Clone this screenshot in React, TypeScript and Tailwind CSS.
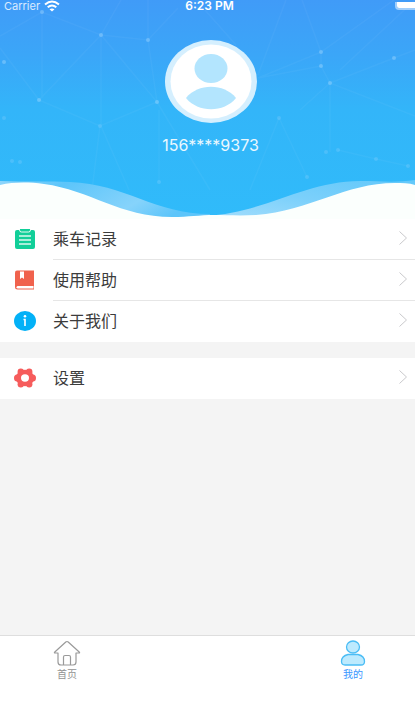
import type { ReactNode } from "react";

const stars = [
  [42, 12], [101, 35], [148, 40], [4, 62], [39, 100], [157, 102], [100, 126], [4, 118],
  [321, 52], [321, 66], [330, 83], [394, 58], [279, 118], [326, 152], [338, 150],
  [376, 159], [159, 182], [307, 177], [12, 161], [20, 162], [408, 166],
];

function Backdrop() {
  return (
    <svg
      className="absolute inset-0 h-full w-full"
      viewBox="0 0 415 219"
      preserveAspectRatio="none"
      aria-hidden="true"
    >
      <defs>
        <linearGradient id="sky" x1="0" y1="0" x2="0" y2="1">
          <stop offset="0" stopColor="#409bf8" />
          <stop offset="0.25" stopColor="#3ba6f8" />
          <stop offset="0.5" stopColor="#33b5f9" />
          <stop offset="1" stopColor="#30bbfa" />
        </linearGradient>
        <linearGradient id="foamLeft" x1="0" y1="0" x2="1" y2="0.3">
          <stop offset="0" stopColor="#8fd6fb" />
          <stop offset="0.3" stopColor="#5cc5fa" />
          <stop offset="0.75" stopColor="#86d3fb" />
          <stop offset="1" stopColor="#5cc5fa" />
        </linearGradient>
        <linearGradient id="foamRight" x1="0" y1="1" x2="1" y2="0">
          <stop offset="0" stopColor="#a5defc" />
          <stop offset="0.5" stopColor="#7bd0fb" />
          <stop offset="1" stopColor="#62c8fa" />
        </linearGradient>
      </defs>
      <rect width="415" height="219" fill="url(#sky)" />
      <g fill="none" stroke="#fff" strokeOpacity="0.04" strokeWidth="1.500">
        <path d="M0 36L42 12L101 35L148 40L178 8M42 12V98M0 48L39 100L101 35L157 102L148 40V0M101 35L121 0M101 35V126L129 190M39 100L100 126L157 102L210 190M100 126L92 190M159 182V110" />
        <path d="M205 10L236 45M286 0L258 75M302 0L321 52L394 0M258 78L321 52V66L330 83L394 58L415 50M258 78L321 66M415 0L340 70M330 83L300 110M330 83V152M330 83L415 116M279 118L307 177M279 118L250 190M338 150L376 159L408 166" />
      </g>
      <g fill="#a9dcff">
        {stars.map(([x, y]) => (
          <circle key={`${x}-${y}`} cx={x} cy={y} r="2" fillOpacity={y > 110 ? 0.22 : 0.4} />
        ))}
      </g>
      <path d="M0 181C25 182 50 181 70 182C125 184 155 214 210 214V219H0Z" fill="url(#foamLeft)" />
      <path d="M205 216C265 213 305 181 360 181C380 181 395 183 415 180V219H205Z" fill="url(#foamRight)" />
      <path
        d="M0 185C14 182 28 182 44 184C90 190 120 217 172 217C190 217 198 215 215 215C225 215 240 216 256 215C310 211 345 183 395 183C402 183 409 183 415 185V219H0Z"
        fill="#fbfffd"
      />
    </svg>
  );
}

function Avatar() {
  return (
    <svg className="h-[83px] w-[92px]" viewBox="0 0 92 83" aria-hidden="true">
      <ellipse cx="46" cy="41.5" rx="46" ry="41.5" fill="#d5effe" />
      <ellipse cx="46" cy="41.5" rx="40.5" ry="37" fill="#fff" />
      <ellipse cx="46" cy="28.5" rx="16.5" ry="14.5" fill="#b3e5fe" />
      <path d="M21 58C33 43 59 43 71 58C59 73 33 73 21 58Z" fill="#b3e5fe" />
    </svg>
  );
}

function RecordsIcon() {
  return (
    <svg className="h-5 w-[22px]" viewBox="0 0 22 20" aria-hidden="true">
      <rect x="1" y="1" width="20" height="19" rx="2" fill="#12cf99" />
      <path d="M5.500 0V1Q5.500 3 7.500 3H14.500Q16.500 3 16.500 1V0" fill="#12cf99" stroke="#fff" strokeWidth="0.900" />
      <path d="M5 7H17M5 11H17M5 15H17" stroke="#d9f9ee" strokeWidth="1.400" />
    </svg>
  );
}

function HelpIcon() {
  return (
    <svg className="h-5 w-[22px]" viewBox="0 0 22 20" aria-hidden="true">
      <path d="M3 0.500H20V19.500H3.500Q1 19.500 1 17V2.500Q1 0.500 3 0.500Z" fill="#f0624d" />
      <path d="M6 1.500H10V9L8 7.500L6 9Z" fill="#fff" />
      <path d="M19.500 16H4Q2.500 16 2.500 17.200T4 18.500H19.500Z" fill="#fff" />
    </svg>
  );
}

function AboutIcon() {
  return (
    <svg className="h-5 w-[22px]" viewBox="0 0 22 20" aria-hidden="true">
      <ellipse cx="11" cy="10" rx="11" ry="10" fill="#03b1f7" />
      <circle cx="11" cy="5.300" r="1.300" fill="#fff" />
      <path d="M9.500 8.500H11V15" fill="none" stroke="#fff" strokeWidth="1.600" />
    </svg>
  );
}

function SettingsIcon() {
  return (
    <svg className="h-5 w-[22px]" viewBox="0 0 22 20" aria-hidden="true">
      <g fill="#f65c5c">
        <ellipse cx="11" cy="10" rx="9.200" ry="8.300" />
        <ellipse cx="3.200" cy="10" rx="3.200" ry="3.500" />
        <ellipse cx="18.800" cy="10" rx="3.200" ry="3.500" />
        <circle cx="6.800" cy="3.700" r="3.200" />
        <circle cx="15.200" cy="3.700" r="3.200" />
        <circle cx="6.800" cy="16.300" r="3.200" />
        <circle cx="15.200" cy="16.300" r="3.200" />
      </g>
      <ellipse cx="11" cy="10" rx="4" ry="3.700" fill="#fff" />
    </svg>
  );
}

type RowProps = {
  icon: ReactNode;
  label: string;
  divided?: boolean;
};

function Row({ icon, label, divided }: RowProps) {
  return (
    <li>
      <button type="button" className="flex w-full items-center bg-white pl-[14px] text-left">
        <span className="pb-0.5">{icon}</span>
        <span
          className={`ml-[17px] flex h-[41px] flex-1 items-center justify-between border-b pr-2 pb-0.5 text-base text-[#3c3c3c] ${
            divided ? "border-[#e6e6e6]" : "border-white"
          }`}
        >
          {label}
          <svg className="h-[14px] w-2" viewBox="0 0 8 14" fill="none" stroke="#c9c9cc" aria-hidden="true">
            <path d="M0.500 0.500L7.500 7L0.500 13.500" />
          </svg>
        </span>
      </button>
    </li>
  );
}

function StatusBar() {
  return (
    <div className="relative grid h-2 grid-cols-3 items-center font-[Inter] text-[11px] leading-[8px] text-white">
      <span className="flex items-center gap-1 pl-1 text-white/80">
        Carrier
        <svg className="h-3 w-4" viewBox="0 0 16 12" fill="none" stroke="#fff" strokeWidth="2" aria-hidden="true">
          <path d="M1 4.500Q8 -1.500 15 4.500M3.700 7.300Q8 3.700 12.300 7.300" />
          <path d="M8 11.500L5.500 9.300Q8 7.500 10.500 9.300Z" fill="#fff" stroke="none" />
        </svg>
      </span>
      <span className="pl-1 text-center text-xs leading-[8px] font-semibold">6:23 PM</span>
      <span className="h-2 w-5 justify-self-end rounded-bl-sm border-b-2 border-l-2 border-white/50 bg-white bg-clip-padding" />
    </div>
  );
}

export default function App() {
  return (
    <div className="flex min-h-screen flex-col overflow-hidden bg-[#f4f4f4] font-['Noto_Sans_CJK_SC',sans-serif]">
      <header className="relative h-[219px]">
        <Backdrop />
        <StatusBar />
        <div className="relative flex flex-col items-center gap-3 pt-8 pl-[6px]">
          <Avatar />
          <p className="font-[Inter] text-base leading-5 text-white/90">156****9373</p>
        </div>
      </header>

      <main className="flex flex-1 flex-col gap-4">
        <ul className="bg-white">
          <Row icon={<RecordsIcon />} label="乘车记录" divided />
          <Row icon={<HelpIcon />} label="使用帮助" divided />
          <Row icon={<AboutIcon />} label="关于我们" />
        </ul>
        <ul>
          <Row icon={<SettingsIcon />} label="设置" />
        </ul>
      </main>

      <nav className="flex h-[67px] justify-between border-t border-[#dedede] bg-white pr-[14px] pl-[19px] pt-1 text-[10px] leading-4">
        <a href="#home" className="flex w-24 flex-col items-center text-[#929292]">
          <svg className="h-[26px] w-7" viewBox="0 0 28 26" fill="none" stroke="#9a9a9a" strokeWidth="1.200" strokeLinejoin="round" aria-hidden="true">
            <path d="M5 13H2.200Q0.800 13 1.800 12L12.800 2Q14 1 15.200 2L26.200 12Q27.200 13 25.800 13H23V22Q23 25 20 25H8Q5 25 5 22Z" />
            <path d="M10.500 25V17Q10.500 15.500 12 15.500H16Q17.500 15.500 17.500 17V25" />
          </svg>
          首页
        </a>
        <a href="#me" aria-current="page" className="flex w-24 flex-col items-center text-[#3896ff]">
          <svg className="h-[26px] w-7" viewBox="0 0 28 26" fill="#bdeafe" stroke="#4bbdf5" strokeWidth="1.300" aria-hidden="true">
            <ellipse cx="14" cy="7" rx="6.500" ry="6" />
            <path d="M9 14.500H19Q25.500 16 25.500 21.500Q25.500 25 22 25H6Q2.500 25 2.500 21.500Q2.500 16 9 14.500Z" />
          </svg>
          我的
        </a>
      </nav>
    </div>
  );
}
